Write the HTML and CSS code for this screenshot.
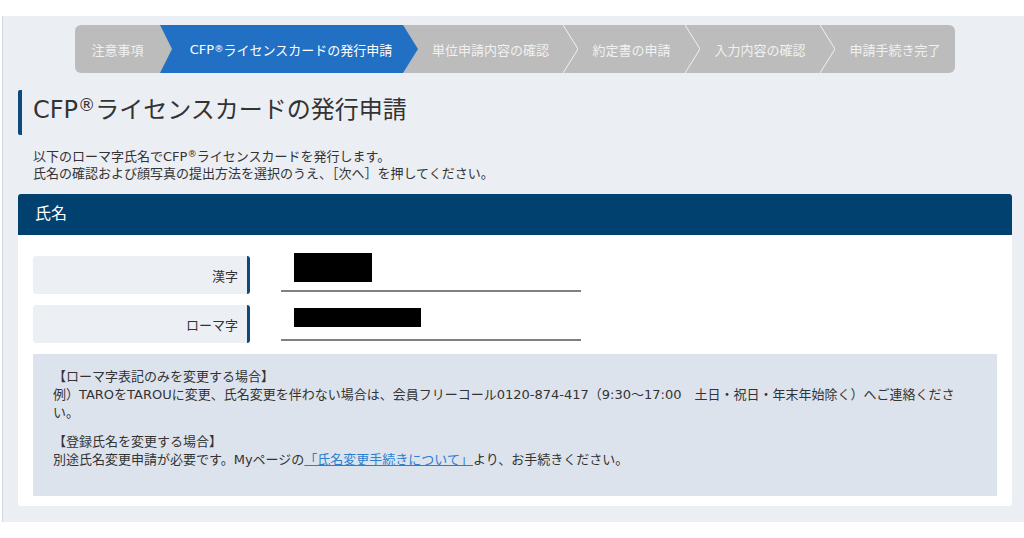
FILE: index.html
```html
<!DOCTYPE html>
<html lang="ja">
<head>
<meta charset="utf-8">
<title>CFPライセンスカードの発行申請</title>
<link rel="stylesheet" href="styles.css">
</head>
<body>
<div class="page">
  <div class="panel">
    <nav class="steps">
      <div class="step s1">注意事項</div>
      <div class="step active">CFP<span class="reg">®</span>ライセンスカードの発行申請</div>
      <div class="step s3">単位申請内容の確認</div>
      <svg class="sep" width="15" height="48" viewBox="0 0 15 48"><polyline points="0,0 15,24 0,48" fill="none" stroke="#f2f2f2" stroke-width="1"/></svg>
      <div class="step s4">約定書の申請</div>
      <svg class="sep" width="15" height="48" viewBox="0 0 15 48"><polyline points="0,0 15,24 0,48" fill="none" stroke="#f2f2f2" stroke-width="1"/></svg>
      <div class="step s5">入力内容の確認</div>
      <svg class="sep" width="15" height="48" viewBox="0 0 15 48"><polyline points="0,0 15,24 0,48" fill="none" stroke="#f2f2f2" stroke-width="1"/></svg>
      <div class="step s6">申請手続き完了</div>
    </nav>

    <h1 class="title">CFP<span class="reg">®</span>ライセンスカードの発行申請</h1>
    <p class="lead">以下のローマ字氏名でCFP<span class="reg">®</span>ライセンスカードを発行します。<br>氏名の確認および顔写真の提出方法を選択のうえ、［次へ］を押してください。</p>

    <section class="card">
      <h2 class="card-head">氏名</h2>
      <div class="card-body">
        <div class="row">
          <div class="label">漢字</div>
          <div class="value"><span class="redact r1"></span></div>
        </div>
        <div class="row">
          <div class="label">ローマ字</div>
          <div class="value"><span class="redact r2"></span></div>
        </div>
        <div class="notice">
          <p>【ローマ字表記のみを変更する場合】<br>例）TAROをTAROUに変更、氏名変更を伴わない場合は、会員フリーコール0120-874-417（9:30～17:00　土日・祝日・年末年始除く）へご連絡ください。</p>
          <p>【登録氏名を変更する場合】<br>別途氏名変更申請が必要です。Myページの<a href="#" class="link">「氏名変更手続きについて」</a>より、お手続きください。</p>
        </div>
      </div>
    </section>
  </div>
</div>
</body>
</html>
```

FILE: styles.css
```css
* { box-sizing: border-box; }
html, body { margin: 0; padding: 0; background: #ffffff; }
body {
  font-family: "DejaVu Sans", "Noto Sans CJK JP", sans-serif;
  color: #333333;
}
.page { padding-top: 16px; height: 538px; }
.panel {
  margin-left: 2px;
  background: #ebeef3;
  border-left: 1px solid #d6d9de;
  padding: 9px 12px 15px 15px;
  height: 506px;
}
.reg {
  font-size: 0.72em;
  vertical-align: 0.4em;
  line-height: 0;
}

/* stepper */
.steps {
  display: flex;
  margin-left: 57px;
  width: 880px;
  height: 48px;
  background: #bcbcbc;
  border-radius: 6px;
  overflow: hidden;
}
.step {
  display: flex;
  align-items: center;
  justify-content: center;
  height: 48px;
  font-size: 13px;
  color: #f1f1f1;
  white-space: nowrap;
  flex: none;
}
.s1 { width: 85px; }
.active {
  width: 258px;
  background: #2170c4;
  color: #ffffff;
  padding-left: 4px;
  clip-path: polygon(0 0, calc(100% - 15px) 0, 100% 50%, calc(100% - 15px) 100%, 0 100%, 12px 50%);
}
.s3 { width: 145px; }
.s4 { width: 107px; }
.s5 { width: 120px; }
.s6 { width: 120px; }
.sep { flex: none; display: block; }

/* title */
.title {
  margin: 17px 0 0 0;
  border-left: 4px solid #0d4a7c;
  border-radius: 2px;
  padding-left: 11px;
  height: 45px;
  line-height: 41px;
  font-size: 24px;
  font-weight: normal;
  color: #333333;
}
.lead {
  margin: 13px 0 0 15px;
  font-size: 13px;
  line-height: 17px;
  color: #333333;
}

/* card */
.card {
  margin-top: 12px;
  background: #ffffff;
  border-radius: 3px;
  overflow: hidden;
}
.card-head {
  margin: 0;
  height: 41px;
  line-height: 40px;
  background: #01416f;
  color: #ffffff;
  font-size: 16px;
  font-weight: normal;
  padding-left: 17px;
}
.card-body {
  padding: 21px 15px 10px 15px;
}
.row {
  display: flex;
  align-items: stretch;
  height: 38px;
  margin-bottom: 11px;
}
.label {
  width: 217px;
  flex: none;
  background: #eceff4;
  border-right: 3px solid #0d4a7c;
  border-radius: 3px;
  display: flex;
  align-items: center;
  justify-content: flex-end;
  padding-right: 9px;
  font-size: 13px;
  color: #333333;
}
.value {
  margin-left: 31px;
  width: 300px;
  border-bottom: 2px solid #808080;
  margin-bottom: 2px;
}
.redact { display: block; background: #000000; margin-left: 13px; }
.r1 { width: 78px; height: 29px; margin-top: -3px; }
.r2 { width: 127px; height: 19px; margin-top: 3px; }

.notice {
  background: #dde3ec;
  padding: 14px 20px 20px 20px;
  font-size: 13px;
  line-height: 18px;
  color: #333333;
  min-height: 142px;
}
.notice p { margin: 0 0 11px 0; }
.notice p:last-child { margin-bottom: 0; }
.link { color: #2a7fd0; text-decoration: underline; }
```
